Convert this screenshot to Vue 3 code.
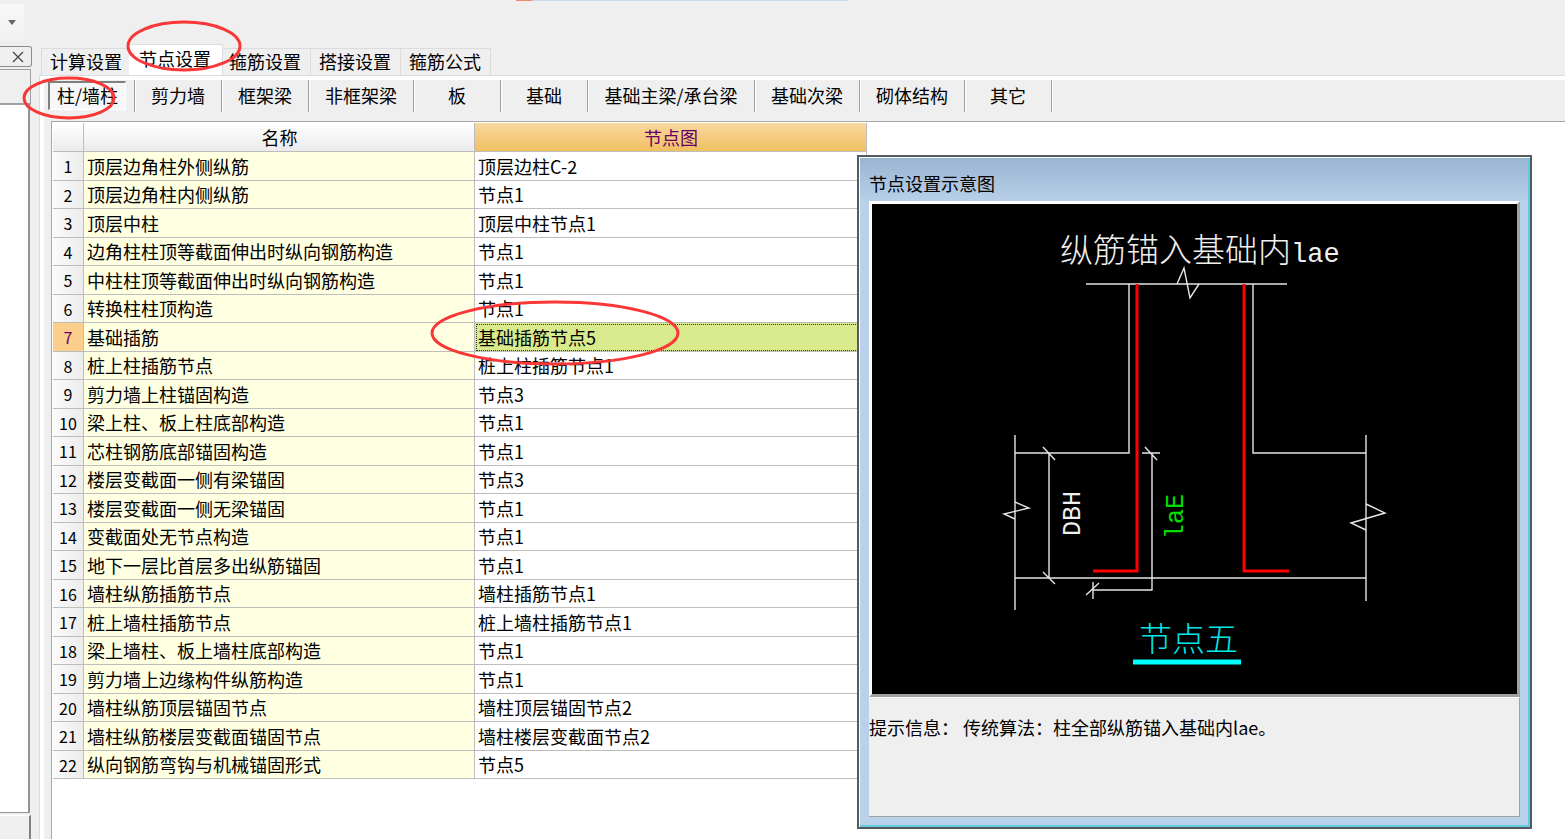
<template>
  <div class="app">
    <header class="toolbar">
      <button type="button" class="toolbar-drop" aria-label="展开">
        <svg width="8" height="5" viewBox="0 0 8 5"><path d="M0 0h8L4 5z" fill="#666" /></svg>
      </button>
      <div class="toolbar-strip"></div>
    </header>

    <div class="workspace">
      <aside class="dock">
        <div class="dock-title">
          <button type="button" class="dock-close" aria-label="关闭">
            <svg width="12" height="12" viewBox="0 0 12 12">
              <path d="M1 1l10 10M11 1L1 11" stroke="#444" stroke-width="1.3" fill="none" />
            </svg>
          </button>
        </div>
        <div class="dock-head"></div>
        <div class="dock-list"></div>
        <div class="dock-foot"></div>
      </aside>

      <main class="main">
        <nav class="tabs">
          <button
            v-for="tab in tabs"
            :key="tab"
            type="button"
            class="tab"
            :class="{ active: tab === activeTab }"
            @click="activeTab = tab"
          >
            {{ tab }}
          </button>
        </nav>

        <section class="page">
          <div class="kinds">
            <div v-for="kind in kinds" :key="kind" class="kind-slot" :class="{ wide: kind.length > 6 }">
              <button
                type="button"
                class="kind"
                :class="{ pressed: kind === activeKind }"
                @click="activeKind = kind"
              >
                {{ kind }}
              </button>
            </div>
          </div>

          <div class="grid-area">
            <table class="grid">
              <colgroup>
                <col class="col-no" />
                <col class="col-name" />
                <col class="col-node" />
              </colgroup>
              <thead>
                <tr>
                  <th></th>
                  <th>名称</th>
                  <th class="current">节点图</th>
                </tr>
              </thead>
              <tbody>
                <tr
                  v-for="(row, i) in rows"
                  :key="row[0]"
                  :class="{ selected: i === selected }"
                  @click="selected = i"
                >
                  <th scope="row">{{ i + 1 }}</th>
                  <td class="name">{{ row[0] }}</td>
                  <td class="node">{{ row[1] }}</td>
                </tr>
              </tbody>
            </table>
          </div>
        </section>
      </main>
    </div>

    <section class="dialog" aria-label="节点设置示意图">
      <h2 class="dialog-title">节点设置示意图</h2>
      <div class="canvas">
        <svg class="drawing" viewBox="0 0 645 490" preserveAspectRatio="xMidYMid meet">
          <g class="outline">
            <path d="M214 80H415" />
            <path d="M305 80L312 64L318 94L327 80" />
            <path d="M257 80V249H143" />
            <path d="M381 80V249H494" />
            <path d="M143 231V406" />
            <path d="M494 231V397" />
            <path d="M143 374H494" />
            <path d="M143 298L157 304L132 310L143 315" />
            <path d="M494 300L513 309L479 319L494 326" />
            <path d="M177 249V374M171 243L183 256M171 368L183 380" />
            <path d="M270 249H288M273 243L285 256M280 249V386H221M221 378V395M214 391L227 379" />
          </g>
          <g class="rebar">
            <path d="M265 80V367H221" />
            <path d="M372 80V367H417" />
          </g>
          <text x="188" y="58" class="cad">纵筋锚入基础内<tspan class="cad-latin">lae</tspan></text>
          <text class="cad-dim" transform="translate(208 332) rotate(-90)">DBH</text>
          <text class="cad-dim green" transform="translate(311 335) rotate(-90)">laE</text>
          <text x="267" y="447" class="cad cyan">节点五</text>
          <path d="M261 458H369" stroke="#00ffff" stroke-width="5" />
        </svg>
      </div>
      <p class="hint">提示信息： 传统算法：柱全部纵筋锚入基础内lae。</p>
    </section>

    <svg class="marks" aria-hidden="true">
      <ellipse cx="184" cy="46" rx="56" ry="24" />
      <ellipse cx="69" cy="98" rx="45" ry="20" />
      <ellipse cx="555" cy="333" rx="123" ry="31" />
    </svg>
  </div>
</template>

<script setup>
import { ref } from "vue";

const tabs = ["计算设置", "节点设置", "箍筋设置", "搭接设置", "箍筋公式"];
const activeTab = ref("节点设置");

const kinds = [
  "柱/墙柱",
  "剪力墙",
  "框架梁",
  "非框架梁",
  "板",
  "基础",
  "基础主梁/承台梁",
  "基础次梁",
  "砌体结构",
  "其它",
];
const activeKind = ref("柱/墙柱");

const rows = [
  ["顶层边角柱外侧纵筋", "顶层边柱C-2"],
  ["顶层边角柱内侧纵筋", "节点1"],
  ["顶层中柱", "顶层中柱节点1"],
  ["边角柱柱顶等截面伸出时纵向钢筋构造", "节点1"],
  ["中柱柱顶等截面伸出时纵向钢筋构造", "节点1"],
  ["转换柱柱顶构造", "节点1"],
  ["基础插筋", "基础插筋节点5"],
  ["桩上柱插筋节点", "桩上柱插筋节点1"],
  ["剪力墙上柱锚固构造", "节点3"],
  ["梁上柱、板上柱底部构造", "节点1"],
  ["芯柱钢筋底部锚固构造", "节点1"],
  ["楼层变截面一侧有梁锚固", "节点3"],
  ["楼层变截面一侧无梁锚固", "节点1"],
  ["变截面处无节点构造", "节点1"],
  ["地下一层比首层多出纵筋锚固", "节点1"],
  ["墙柱纵筋插筋节点", "墙柱插筋节点1"],
  ["桩上墙柱插筋节点", "桩上墙柱插筋节点1"],
  ["梁上墙柱、板上墙柱底部构造", "节点1"],
  ["剪力墙上边缘构件纵筋构造", "节点1"],
  ["墙柱纵筋顶层锚固节点", "墙柱顶层锚固节点2"],
  ["墙柱纵筋楼层变截面锚固节点", "墙柱楼层变截面节点2"],
  ["纵向钢筋弯钩与机械锚固形式", "节点5"],
];
const selected = ref(6);
</script>

<style>
body {
  margin: 0;
  background: #efefef;
}
</style>

<style scoped>
.app {
  position: relative;
  display: flex;
  flex-direction: column;
  min-height: 100vh;
  overflow: hidden;
  background: #efefef;
  color: #000;
  font-family: "Noto Sans CJK SC", sans-serif;
  font-size: 18px;
  line-height: 24px;
}

button {
  font: inherit;
  color: inherit;
  margin: 0;
  padding: 0;
  border: 0;
  background: none;
  white-space: nowrap;
}

.toolbar {
  display: flex;
  align-items: flex-start;
  height: 44px;
}

.toolbar-drop {
  display: flex;
  align-items: center;
  justify-content: center;
  width: 24px;
  height: 36px;
  margin-top: 4px;
  border-radius: 0 4px 4px 0;
  background: linear-gradient(#f8f8f8, #f1f1f1);
}

.toolbar-strip {
  width: 332px;
  height: 1px;
  margin-left: 492px;
  background: linear-gradient(90deg, #f08a6c 16px, #cbd9e8 17px);
}

.workspace {
  display: flex;
  flex: 1;
}

.dock {
  display: flex;
  flex-direction: column;
  width: 32px;
  margin-right: 7px;
}

.dock-title {
  display: flex;
  justify-content: flex-end;
  margin: 2px 0 2px;
  height: 19px;
  border: 1px solid #8c8c8c;
  border-left: 0;
  border-radius: 0 3px 3px 0;
}

.dock-close {
  display: flex;
  align-items: center;
  padding: 0 7px;
}

.dock-head {
  height: 33px;
  margin-right: 1px;
  border: 1px solid #a0a0a0;
  border-left: 0;
  border-bottom-width: 2px;
}

.dock-list {
  flex: 1;
  margin-right: 2px;
  border-right: 2px solid #8e939c;
  border-bottom: 1px solid #8e939c;
  background: #fff;
}

.dock-foot {
  height: 23px;
  margin: 2px 1px 0 0;
  border-top: 1px solid #fff;
  border-right: 2px solid #808080;
}

.main {
  display: flex;
  flex: 1;
  flex-direction: column;
  min-width: 0;
}

.tabs {
  display: flex;
  align-items: flex-end;
  height: 31px;
  padding-left: 2px;
}

.tab {
  height: 27px;
  padding: 0 9px 2px 8px;
  border: 1px solid #dcdcdc;
  border-bottom: 0;
}

.tab + .tab {
  border-left: 0;
}

.tab.active {
  position: relative;
  height: 31px;
  margin: 0 -2px 0 -3px;
  padding: 0 11px 5px 10px;
  background: #fff;
}

.page {
  display: flex;
  flex: 1;
  flex-direction: column;
  border-top: 1px solid #dcdcdc;
  border-left: 1px solid #dcdcdc;
}

.kinds {
  display: flex;
  box-sizing: border-box;
  height: 45px;
  padding-left: 4px;
  border-left: 4px solid #fff;
  border-top: 4px solid #fff;
}

.kind-slot {
  box-sizing: border-box;
  min-width: 87px;
  height: 32px;
  padding: 1px 8px 2px 4px;
  border-right: 1px solid #a0a0a0;
  box-shadow: 1px 0 #fff;
}

.kind-slot:first-child {
  padding-left: 0;
}

.kind-slot.wide {
  min-width: 167px;
}

.kind {
  width: 100%;
  height: 29px;
  padding: 0 8px 2px 12px;
}

.kind.pressed {
  padding: 0 0 2px;
  border: 1px solid #fff;
  border-top: 2px solid #808080;
  border-left: 2px solid #808080;
  background: #f7f7f7;
}

.grid-area {
  position: relative;
  flex: 1;
  padding: 1px 0 0 1px;
  margin-left: 11px;
  border-top: 1px solid #a7a7ae;
  border-left: 1px solid #a7a7ae;
  background: #fff;
}

/* white rim of the tab page beside the grid */
.grid-area::before {
  content: "";
  position: absolute;
  top: -1px;
  bottom: 0;
  left: -12px;
  width: 4px;
  background: #fff;
}

.grid {
  width: 814px;
  table-layout: fixed;
  border-collapse: separate;
  border-spacing: 0;
}

.col-no {
  width: 31px;
}

.col-name {
  width: 391px;
}

.grid th,
.grid td {
  box-sizing: border-box;
  height: 28px;
  padding: 0 2px 1px 3px;
  border-right: 1px solid #bdbdbd;
  border-bottom: 1px solid #bdbdbd;
  line-height: 24px;
  font-weight: 400;
  text-align: left;
  white-space: nowrap;
}

.grid tbody tr:nth-child(odd) > * {
  height: 29px;
}

.grid thead th {
  height: 29px;
  text-align: center;
  background: linear-gradient(#fff, #ebebeb);
}

.grid thead th.current {
  color: #660066;
  background: linear-gradient(#f8d7a0, #f0c060);
}

.grid tbody th {
  padding: 0;
  font-size: 16px;
  text-align: center;
  background: linear-gradient(90deg, #fbfbfb, #ececec);
}

.grid .name {
  background: #ffffe1;
}

.grid .selected th {
  color: #660066;
  background: #fcce8c;
}

.grid .selected .node {
  background: #d9ea8c;
  outline: 1px dotted #334;
  outline-offset: -2px;
}

.dialog {
  position: absolute;
  top: 155px;
  left: 857px;
  right: 33px;
  display: flex;
  flex-direction: column;
  padding: 0 10px 10px;
  border: 2px solid #555a5e;
  box-shadow: inset 1px 1px #fff, inset -2px -2px #62cbe0;
  background: linear-gradient(#99b4d1, #b9d1ea 46px);
  background-color: #b9d1ea;
}

.dialog-title {
  margin: 0;
  padding: 14px 0 6px;
  font-size: 18px;
  line-height: 24px;
  font-weight: 400;
}

.canvas {
  border: 3px solid #fff;
  border-right-color: #a0a0a0;
  border-bottom-color: #a0a0a0;
  background: #000;
}

.drawing {
  display: block;
  width: 100%;
}

.outline path {
  fill: none;
  stroke: #e6e6e6;
  stroke-width: 1.4;
}

.rebar path {
  fill: none;
  stroke: #ff0000;
  stroke-width: 3;
}

.cad {
  font-size: 33px;
  font-weight: 300;
  fill: #f0f0f0;
}

.cad-latin,
.cad-dim {
  font-family: "Liberation Mono", monospace;
  font-size: 27px;
}

.cad-dim {
  font-size: 25px;
  fill: #f0f0f0;
}

.cad-dim.green {
  fill: #00e000;
}

.cad.cyan {
  fill: #00e8e8;
}

.hint {
  min-height: 101px;
  margin: 0;
  padding: 17px 0 0;
  border: 1px solid #fff;
  border-left: 0;
  border-right-color: #a0a0a0;
  border-bottom-color: #a0a0a0;
  background: #efefef;
}

.marks {
  position: absolute;
  inset: 0;
  width: 100%;
  height: 100%;
  pointer-events: none;
}

.marks ellipse {
  fill: none;
  stroke: #fa3737;
  stroke-width: 3;
}
</style>
